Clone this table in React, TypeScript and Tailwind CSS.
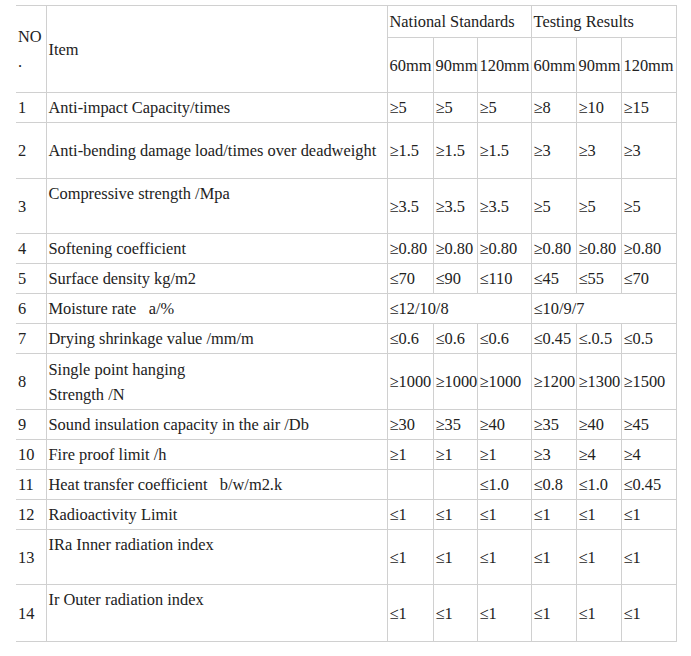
const rows: { no: string; item: string[]; h: number; top?: boolean; vals: string[]; span?: boolean }[] = [
  { no: '1', item: ['Anti-impact Capacity/times'], h: 30, vals: ['≥5', '≥5', '≥5', '≥8', '≥10', '≥15'] },
  { no: '2', item: ['Anti-bending damage load/times over deadweight'], h: 56, vals: ['≥1.5', '≥1.5', '≥1.5', '≥3', '≥3', '≥3'] },
  { no: '3', item: ['Compressive strength /Mpa'], h: 55, top: true, vals: ['≥3.5', '≥3.5', '≥3.5', '≥5', '≥5', '≥5'] },
  { no: '4', item: ['Softening coefficient'], h: 30, vals: ['≥0.80', '≥0.80', '≥0.80', '≥0.80', '≥0.80', '≥0.80'] },
  { no: '5', item: ['Surface density kg/m2'], h: 30, vals: ['≤70', '≤90', '≤110', '≤45', '≤55', '≤70'] },
  { no: '6', item: ['Moisture rate\u00a0\u00a0\u00a0a/%'], h: 30, span: true, vals: ['≤12/10/8', '≤10/9/7'] },
  { no: '7', item: ['Drying shrinkage value /mm/m'], h: 30, vals: ['≤0.6', '≤0.6', '≤0.6', '≤0.45', '≤.0.5', '≤0.5'] },
  { no: '8', item: ['Single point hanging', 'Strength /N'], h: 56, vals: ['≥1000', '≥1000', '≥1000', '≥1200', '≥1300', '≥1500'] },
  { no: '9', item: ['Sound insulation capacity in the air /Db'], h: 30, vals: ['≥30', '≥35', '≥40', '≥35', '≥40', '≥45'] },
  { no: '10', item: ['Fire proof limit /h'], h: 30, vals: ['≥1', '≥1', '≥1', '≥3', '≥4', '≥4'] },
  { no: '11', item: ['Heat transfer coefficient\u00a0\u00a0\u00a0b/w/m2.k'], h: 30, vals: ['', '', '≤1.0', '≤0.8', '≤1.0', '≤0.45'] },
  { no: '12', item: ['Radioactivity Limit'], h: 30, vals: ['≤1', '≤1', '≤1', '≤1', '≤1', '≤1'] },
  { no: '13', item: ['IRa Inner radiation index'], h: 55, top: true, vals: ['≤1', '≤1', '≤1', '≤1', '≤1', '≤1'] },
  { no: '14', item: ['Ir Outer radiation index'], h: 57, top: true, vals: ['≤1', '≤1', '≤1', '≤1', '≤1', '≤1'] },
];

const cell =
  "border border-[#d0d0d0] px-[2px] py-0 align-middle whitespace-nowrap font-['Liberation_Serif','Times_New_Roman',serif] text-[16.4px] leading-[25px] text-[#222]";

export default function App() {
  return (
    <div className="w-[691px] h-[656px] bg-white pt-[5px] pl-[16px] font-['Liberation_Serif',serif] text-[16px] text-[#222]">
      <table className="table-fixed border-collapse w-[660px]">
        <colgroup>
          <col className="w-[30px]" />
          <col className="w-[341px]" />
          <col className="w-[46px]" />
          <col className="w-[44px]" />
          <col className="w-[54px]" />
          <col className="w-[45px]" />
          <col className="w-[45px]" />
          <col className="w-[55px]" />
        </colgroup>
        <tbody>
          <tr className="h-[32px]">
            <td rowSpan={2} className={`${cell} border-l-0 whitespace-normal`}>
              NO
              <br />.
            </td>
            <td rowSpan={2} className={cell}>Item</td>
            <td colSpan={3} className={cell}>National Standards</td>
            <td colSpan={3} className={cell}>Testing Results</td>
          </tr>
          <tr className="h-[55px]">
            {['60mm', '90mm', '120mm', '60mm', '90mm', '120mm'].map((t, i) => (
              <td key={i} className={cell}>{t}</td>
            ))}
          </tr>
          {rows.map((r) => (
            <tr key={r.no} style={{ height: r.h }}>
              <td className={`${cell} border-l-0`}>{r.no}</td>
              <td className={`${cell} ${r.top ? 'align-top pt-[2px]' : ''}`}>
                {r.item.map((l, i) => (
                  <div key={i}>{l}</div>
                ))}
              </td>
              {r.span
                ? r.vals.map((v, i) => (
                    <td key={i} colSpan={3} className={cell}>{v}</td>
                  ))
                : r.vals.map((v, i) => (
                    <td key={i} className={cell}>{v}</td>
                  ))}
            </tr>
          ))}
        </tbody>
      </table>
    </div>
  );
}
